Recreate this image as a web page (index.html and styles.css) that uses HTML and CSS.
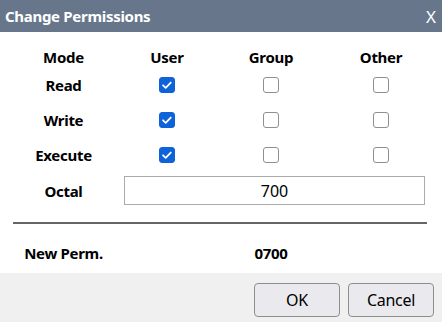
FILE: index.html
```html
<!DOCTYPE html>
<html lang="en">
<head>
    <meta charset="UTF-8">
    <meta name="viewport" content="width=device-width, initial-scale=1.0">
    <title>Change Permissions</title>
    <link rel="stylesheet" href="styles.css">
</head>
<body>
    <div class="dialog">
        <div class="title-bar">
            <span class="title">Change Permissions</span>
            <span class="close">X</span>
        </div>

        <div class="content">
            <div class="perm-grid">
                <div class="head">Mode</div>
                <div class="head">User</div>
                <div class="head">Group</div>
                <div class="head">Other</div>

                <div class="label">Read</div>
                <div class="cell"><input type="checkbox" class="check" checked></div>
                <div class="cell"><input type="checkbox" class="check"></div>
                <div class="cell"><input type="checkbox" class="check"></div>

                <div class="label">Write</div>
                <div class="cell"><input type="checkbox" class="check" checked></div>
                <div class="cell"><input type="checkbox" class="check"></div>
                <div class="cell"><input type="checkbox" class="check"></div>

                <div class="label">Execute</div>
                <div class="cell"><input type="checkbox" class="check" checked></div>
                <div class="cell"><input type="checkbox" class="check"></div>
                <div class="cell"><input type="checkbox" class="check"></div>

                <div class="label octal-label">Octal</div>
                <div class="octal-cell"><input type="text" class="octal" value="700"></div>
            </div>

            <hr class="divider">

            <div class="result">
                <div class="label">New Perm.</div>
                <div class="result-value">0700</div>
            </div>
        </div>

        <div class="footer">
            <button class="btn">OK</button>
            <button class="btn">Cancel</button>
        </div>
    </div>
</body>
</html>
```

FILE: styles.css
```css
body {
    margin: 0;
    padding: 0;
    font-family: "Noto Sans", "Open Sans", sans-serif;
    color: #000;
    background: white;
}

.dialog {
    width: 442px;
    height: 322px;
    display: flex;
    flex-direction: column;
}

.title-bar {
    height: 32px;
    background: #67768b;
    color: white;
    display: flex;
    align-items: center;
    justify-content: space-between;
    padding: 0 5px 0 5px;
}

.title {
    font-size: 15px;
    font-weight: bold;
    letter-spacing: -0.3px;
}

.close {
    font-size: 17px;
    margin-right: 1px;
}

.content {
    flex: 1;
    padding-top: 15px;
}

.perm-grid {
    display: grid;
    grid-template-columns: 103px 104px 104px 116px;
    grid-template-rows: 20px 35px 35px 35px 37px;
    padding-left: 12px;
}

.head,
.label {
    font-size: 15px;
    font-weight: bold;
    display: flex;
    align-items: center;
    justify-content: center;
    letter-spacing: -0.3px;
}

.cell {
    display: flex;
    align-items: center;
    justify-content: center;
}

.check {
    appearance: none;
    width: 16px;
    height: 16px;
    margin: 0;
    border: 1px solid #8f8f8f;
    border-radius: 3px;
    background: white;
}

.check:checked {
    border-color: #0f63d8;
    background: #0f63d8 url("data:image/svg+xml,%3Csvg xmlns='http://www.w3.org/2000/svg' viewBox='0 0 16 16'%3E%3Cpath d='M3.5 8.3l3 2.9 5.8-6' fill='none' stroke='white' stroke-width='2' stroke-linecap='round' stroke-linejoin='round'/%3E%3C/svg%3E") center / 14px no-repeat;
}

.octal-cell {
    grid-column: 2 / 5;
    display: flex;
    align-items: center;
    padding-left: 9px;
    padding-right: 14px;
}

.octal {
    width: 100%;
    height: 29px;
    box-sizing: border-box;
    border: 1px solid #ababab;
    text-align: center;
    font-family: "Noto Sans", "Open Sans", sans-serif;
    font-size: 16px;
    padding: 0;
    color: #000;
}

.divider {
    margin: 13px 15px 0 13px;
    border: none;
    border-top: 2px solid #666;
    height: 0;
}

.result {
    display: grid;
    grid-template-columns: 103px 312px;
    padding-left: 12px;
    margin-top: 19px;
    height: 20px;
}

.result-value {
    font-size: 15px;
    font-weight: bold;
    display: flex;
    align-items: center;
    justify-content: center;
    letter-spacing: -0.3px;
}

.footer {
    height: 49px;
    background: #f0f0f0;
    display: flex;
    justify-content: flex-end;
    align-items: flex-start;
    gap: 8px;
    padding: 10px 8px 0 0;
    box-sizing: border-box;
}

.btn {
    width: 86px;
    height: 34px;
    border: 1px solid #8d8d8d;
    border-radius: 4px;
    background: #eaeaee;
    font-family: "Noto Sans", "Open Sans", sans-serif;
    font-size: 16px;
    color: #000;
    letter-spacing: -0.3px;
}
```
